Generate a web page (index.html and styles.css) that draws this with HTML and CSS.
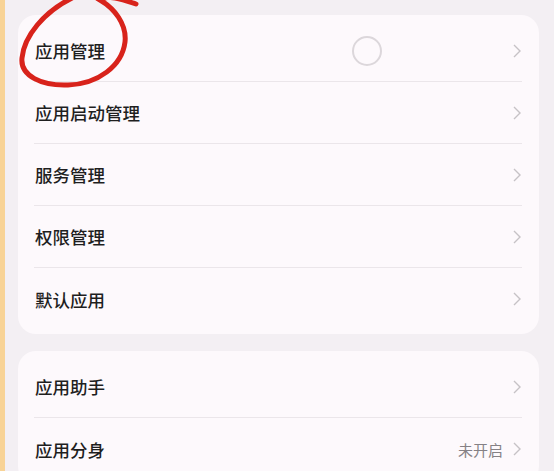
FILE: index.html
```html
<!DOCTYPE html>
<html lang="zh-CN">
<head>
    <meta charset="UTF-8" />
    <meta name="viewport" content="width=device-width, initial-scale=1.0"/>
    <title>应用</title>
    <link rel="stylesheet" href="styles.css">
</head>
<body>
    <div class="page">
        <div class="group">
            <div class="row">
                <span class="label">应用管理</span>
                <span class="spinner"></span>
                <svg class="chev" viewBox="0 0 10 16"><path d="M2 2 L8 8 L2 14"/></svg>
            </div>
            <div class="row">
                <span class="label">应用启动管理</span>
                <svg class="chev" viewBox="0 0 10 16"><path d="M2 2 L8 8 L2 14"/></svg>
            </div>
            <div class="row">
                <span class="label">服务管理</span>
                <svg class="chev" viewBox="0 0 10 16"><path d="M2 2 L8 8 L2 14"/></svg>
            </div>
            <div class="row">
                <span class="label">权限管理</span>
                <svg class="chev" viewBox="0 0 10 16"><path d="M2 2 L8 8 L2 14"/></svg>
            </div>
            <div class="row">
                <span class="label">默认应用</span>
                <svg class="chev" viewBox="0 0 10 16"><path d="M2 2 L8 8 L2 14"/></svg>
            </div>
        </div>

        <div class="group">
            <div class="row">
                <span class="label">应用助手</span>
                <svg class="chev" viewBox="0 0 10 16"><path d="M2 2 L8 8 L2 14"/></svg>
            </div>
            <div class="row">
                <span class="label">应用分身</span>
                <span class="value">未开启</span>
                <svg class="chev" viewBox="0 0 10 16"><path d="M2 2 L8 8 L2 14"/></svg>
            </div>
        </div>
    </div>

    <!-- hand drawn mark over the first item -->
    <svg class="mark" viewBox="0 0 160 100">
        <path d="M136 4 C124 0 108 -6 100 0 C114 8 127 24 125 42 C122 66 98 84 68 85 C42 86 20 76 22 58 C24 36 44 12 72 -2"/>
    </svg>
</body>
</html>
```

FILE: styles.css
```css
body {
    margin: 0;
    background: #f3eff3;
    font-family: "Noto Sans CJK SC", "Noto Sans", sans-serif;
    color: #1f1f1f;
    overflow: hidden;
}

.page {
    min-height: 471px;
    border-left: 5px solid #f8d396;
    padding: 15px 15px 0 13px;
    box-sizing: border-box;
    display: flex;
    flex-direction: column;
    gap: 17px;
}

.group {
    background: #fdf9fc;
    border-radius: 18px;
    padding: 5px 17px 4px 16px;
}

.row {
    height: 62px;
    display: flex;
    align-items: center;
    border-bottom: 1px solid #ebe6ea;
    box-sizing: border-box;
}

.row:last-child {
    border-bottom: none;
}

.label {
    flex: 1;
    font-size: 17.5px;
    font-weight: 500;
    padding-left: 1px;
}

.value {
    font-size: 15px;
    color: #858185;
    margin-right: 9px;
}

.spinner {
    width: 26px;
    height: 26px;
    border: 2px solid #dcd7db;
    border-radius: 50%;
    margin-right: 130px;
}

.chev {
    width: 10px;
    height: 16px;
    fill: none;
    stroke: #c6c2c6;
    stroke-width: 1.4;
}

.mark {
    position: absolute;
    left: 0;
    top: 0;
    width: 160px;
    height: 100px;
    fill: none;
    stroke: #d8231b;
    stroke-width: 5;
    stroke-linecap: round;
}
```
